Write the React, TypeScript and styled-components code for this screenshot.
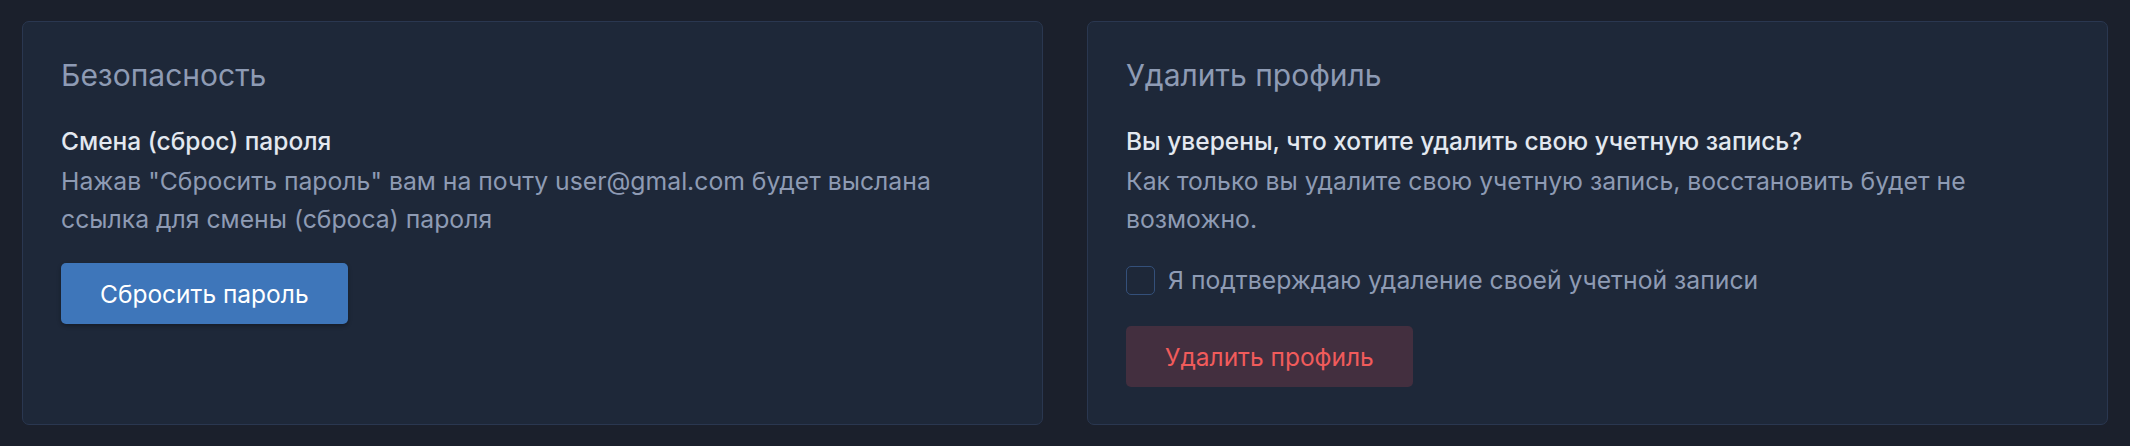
import React from "react";
import styled, { createGlobalStyle } from "styled-components";

const GlobalStyle = createGlobalStyle`
  html, body {
    margin: 0;
    padding: 0;
    background: #1b202c;
  }
  body {
    font-family: Inter, "Noto Sans", sans-serif;
  }
`;

const Page = styled.div`
  display: flex;
  gap: 44px;
  padding: 21px 22px;
  box-sizing: border-box;
  width: 2130px;
  min-height: 446px;
  background: #1b202c;
`;

const Card = styled.section`
  flex: 1 1 0;
  display: flex;
  flex-direction: column;
  align-items: flex-start;
  background: #1e2839;
  border: 1px solid #2a3750;
  border-radius: 7px;
  padding: 37px 38px;
`;

const Title = styled.h2`
  margin: 0 0 30px;
  font-size: 30px;
  line-height: 33px;
  font-weight: 400;
  color: #8e9bb4;
`;

const Subtitle = styled.div`
  font-size: 24.5px;
  line-height: 38px;
  font-weight: 500;
  color: #e3e8f0;
`;

const Text = styled.p`
  margin: 2px 0 0;
  font-size: 24.75px;
  line-height: 38px;
  color: #8e9bb4;
`;

const Button = styled.button<{ $variant?: "primary" | "danger" }>`
  margin-top: ${(p) => (p.$variant === "danger" ? "27px" : "25px")};
  height: 61px;
  padding: 0 39px;
  border: none;
  border-radius: 5px;
  font-family: inherit;
  font-size: 24.5px;
  font-weight: 400;
  cursor: pointer;
  background: ${(p) => (p.$variant === "danger" ? "#432f3f" : "#3e76ba")};
  color: ${(p) => (p.$variant === "danger" ? "#f15b5b" : "#ffffff")};
  box-shadow: ${(p) =>
    p.$variant === "danger" ? "none" : "0 2px 4px rgba(0, 0, 0, 0.3)"};
`;

const CheckRow = styled.label`
  margin-top: 23px;
  display: flex;
  align-items: center;
  gap: 13px;
  font-size: 24.75px;
  line-height: 38px;
  color: #8e9bb4;
  cursor: pointer;
`;

const CheckBox = styled.span`
  width: 29px;
  height: 29px;
  box-sizing: border-box;
  border: 1px solid #34507a;
  border-radius: 5px;
  background: #1e2839;
  flex-shrink: 0;
`;

export default function App() {
  return (
    <>
      <GlobalStyle />
      <Page>
        <Card>
          <Title>Безопасность</Title>
          <Subtitle>Смена (сброс) пароля</Subtitle>
          <Text>
            Нажав "Сбросить пароль" вам на почту user@gmal.com будет выслана
            ссылка для смены (сброса) пароля
          </Text>
          <Button $variant="primary">Сбросить пароль</Button>
        </Card>
        <Card>
          <Title>Удалить профиль</Title>
          <Subtitle>Вы уверены, что хотите удалить свою учетную запись?</Subtitle>
          <Text>
            Как только вы удалите свою учетную запись, восстановить будет не
            возможно.
          </Text>
          <CheckRow>
            <CheckBox />
            Я подтверждаю удаление своей учетной записи
          </CheckRow>
          <Button $variant="danger">Удалить профиль</Button>
        </Card>
      </Page>
    </>
  );
}
